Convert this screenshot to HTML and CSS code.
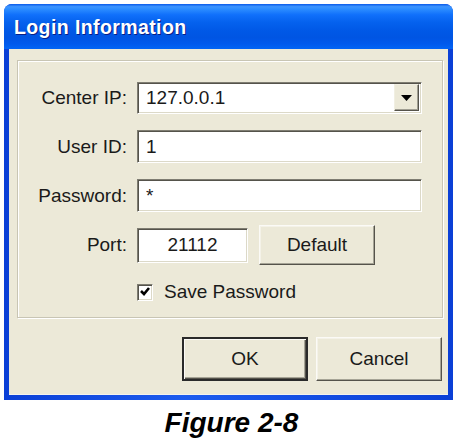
FILE: index.html
```html
<!DOCTYPE html>
<html lang="en">
<head>
    <meta charset="UTF-8">
    <meta name="viewport" content="width=device-width, initial-scale=1.0">
    <title>Login Information</title>

    <link rel="stylesheet" href="styles.css">
</head>
<body>

    <!-- Dialog window -->
    <div class="window">
        <div class="title-bar">
            <span class="title">Login Information</span>
        </div>

        <div class="window-body">
            <!-- Connection fields -->
            <div class="group">
                <div class="row">
                    <label class="field-label">Center IP:</label>
                    <div class="combo">
                        <span class="combo-value">127.0.0.1</span>
                        <span class="combo-btn">
                            <svg width="11" height="6" viewBox="0 0 11 6"><path d="M0 0 H11 L5.5 6 Z" fill="#000"/></svg>
                        </span>
                    </div>
                </div>
                <div class="row">
                    <label class="field-label" for="user-id">User ID:</label>
                    <input class="field" type="text" id="user-id" value="1">
                </div>
                <div class="row">
                    <label class="field-label" for="password">Password:</label>
                    <input class="field" type="text" id="password" value="*">
                </div>
                <div class="row row-port">
                    <label class="field-label" for="port">Port:</label>
                    <input class="field field-port" type="text" id="port" value="21112">
                    <button class="btn btn-small">Default</button>
                </div>
                <div class="row row-check">
                    <span class="field-label"></span>
                    <span class="checkbox">
                        <svg width="12" height="12" viewBox="0 0 12 12"><path d="M2 5 L5 8 L10 2" stroke="#000" stroke-width="2.6" fill="none"/></svg>
                    </span>
                    <span class="check-text">Save Password</span>
                </div>
            </div>

            <!-- Dialog buttons -->
            <div class="actions">
                <button class="btn btn-default">OK</button>
                <button class="btn">Cancel</button>
            </div>
        </div>
    </div>

    <p class="caption">Figure 2-8</p>

</body>
</html>
```

FILE: styles.css
```css
/* Basic reset */
* {
    margin: 0;
    padding: 0;
    box-sizing: border-box;
}

body {
    font-family: "Liberation Sans", Arial, sans-serif;
    background-color: #ffffff;
    width: 461px;
    height: 445px;
    overflow: hidden;
}

.window {
    margin: 4px 0 0 4px;
    width: 449px;
    height: 396px;
    background: linear-gradient(to right, #0a3fd6, #1c5bee 40%, #0a3fd6);
    border-radius: 8px 8px 0 0;
    display: flex;
    flex-direction: column;
}

.title-bar {
    height: 45px;
    border-radius: 8px 8px 0 0;
    background: linear-gradient(to bottom, #0a5ae9 0%, #3d95ff 6%, #2a8bff 12%, #1070fb 24%, #0562ee 40%, #0058e6 60%, #0055e3 75%, #0059ec 88%, #0265f5 100%);
    display: flex;
    align-items: center;
    padding-left: 10px;
}

.title {
    color: #ffffff;
    font-weight: bold;
    font-size: 19.5px;
    letter-spacing: 0.4px;
    text-shadow: 1px 1px 0 #0a1e86;
    padding-top: 2px;
}

.window-body {
    margin: 0 5px 5px 5px;
    flex: 1;
    background-color: #ece9d8;
    display: flex;
    flex-direction: column;
    border-bottom: 1px solid #f4f3ee;
}

/* Group box */
.group {
    margin: 11px 5px 0 8px;
    height: 258px;
    border: 1px solid #c8c5b4;
    box-shadow: inset 1px 1px 0 #ffffff, 1px 1px 0 #ffffff;
    padding: 20px 0 0 0;
    display: flex;
    flex-direction: column;
    gap: 16px;
}

.row {
    display: flex;
    align-items: center;
    height: 33px;
}

.row-port {
    height: 40px;
    margin-top: -3px;
}

.row-port .btn-small {
    margin-left: 11px;
}

.row-check {
    height: 18px;
    margin-top: 2px;
}

.field-label {
    width: 119px;
    padding-right: 10px;
    text-align: right;
    font-size: 19px;
    color: #1a1a1a;
    flex-shrink: 0;
}

/* Sunken fields */
.field,
.combo {
    width: 285px;
    height: 33px;
    background: #ffffff;
    border: 1px solid;
    border-color: #7f7d72 #ffffff #ffffff #7f7d72;
    box-shadow: inset 1px 1px 0 #55534b, inset -1px -1px 0 #dcd9c8;
    font-family: "Liberation Sans", Arial, sans-serif;
    font-size: 19px;
    color: #1a1a1a;
    padding: 0 8px;
    outline: none;
}

.combo {
    display: flex;
    align-items: center;
    justify-content: space-between;
    height: 32px;
    padding: 0 2px 0 8px;
}

.combo-btn {
    width: 25px;
    height: 27px;
    background: #ece9d8;
    border: 1px solid;
    border-color: #f1efe2 #55534b #55534b #f1efe2;
    box-shadow: inset -1px -1px 0 #a09e92;
    display: flex;
    align-items: center;
    justify-content: center;
}

.field-port {
    width: 111px;
    height: 35px;
    text-align: center;
}

/* Checkbox */
.checkbox {
    width: 16px;
    height: 17px;
    background: #ffffff;
    border: 1px solid;
    border-color: #7f7d72 #ffffff #ffffff #7f7d72;
    box-shadow: inset 1px 1px 0 #55534b, inset -1px -1px 0 #dcd9c8;
    display: flex;
    align-items: center;
    justify-content: center;
}

.check-text {
    font-size: 19px;
    color: #1a1a1a;
    margin-left: 11px;
}

/* Raised buttons */
.btn {
    background: #ece9d8;
    font-family: "Liberation Sans", Arial, sans-serif;
    font-size: 19px;
    color: #1a1a1a;
    border: 1px solid;
    border-color: #fbfaf6 #55534b #55534b #fbfaf6;
    box-shadow: inset -1px -1px 0 #a6a496, inset 1px 1px 0 #f4f2e8;
    cursor: pointer;
}

.btn-small {
    width: 116px;
    height: 40px;
}

.actions {
    display: flex;
    justify-content: flex-end;
    gap: 8px;
    margin: 19px 6px 0 0;
}

.actions .btn {
    width: 126px;
    height: 44px;
}

.btn-default {
    border: 2px solid;
    border-color: #2a2a2a;
    box-shadow: inset 1px 1px 0 #fbfaf6, inset -1px -1px 0 #55534b, inset -2px -2px 0 #a6a496;
}

.caption {
    margin-top: 9px;
    text-align: center;
    font-size: 28px;
    line-height: 28px;
    font-weight: bold;
    font-style: italic;
    color: #000;
    padding-left: 2px;
}
```
